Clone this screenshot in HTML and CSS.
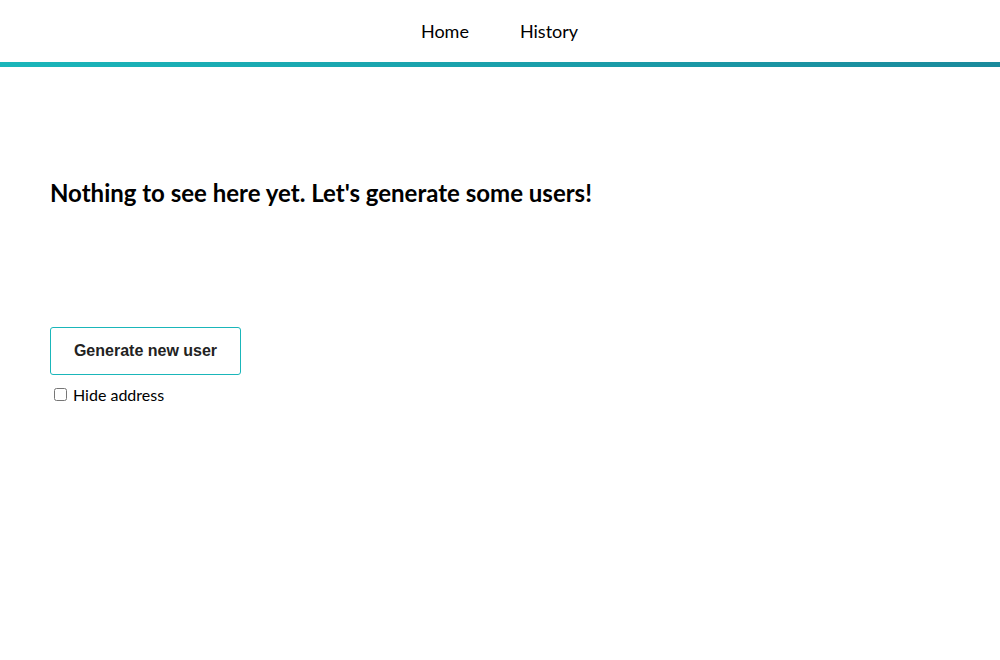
FILE: index.html
```html
<!DOCTYPE html>
<html>
<head>
<meta charset="utf-8">
<link rel="stylesheet" href="styles.css">
</head>
<body>
<header class="topbar">
  <nav class="nav">
    <a class="nav-link" href="#">Home</a>
    <a class="nav-link" href="#">History</a>
  </nav>
</header>
<main class="content">
  <h1 class="title">Nothing to see here yet. Let's generate some users!</h1>
  <div class="controls">
    <button class="gen-btn" type="button">Generate new user</button>
    <label class="hide-label"><input type="checkbox" class="hide-box"> Hide address</label>
  </div>
</main>
</body>
</html>
```

FILE: styles.css
```css
html, body {
  margin: 0;
  padding: 0;
  background: #fff;
}
body {
  font-family: Lato, "Liberation Sans", sans-serif;
  color: #000;
}
.topbar {
  height: 62px;
  border-bottom: 5px solid transparent;
  border-image: linear-gradient(to right, #1ab6ba, #1a8a9c) 1;
  display: flex;
  align-items: center;
  justify-content: center;
}
.nav {
  display: flex;
  gap: 51px;
  margin-right: 1px;
}
.nav-link {
  font-size: 18px;
  color: #000;
  text-decoration: none;
}
.content {
  padding: 0 50px;
}
.title {
  font-size: 24px;
  font-weight: 700;
  margin: 111px 0 0 0;
  line-height: 29px;
}
.controls {
  margin-top: 120px;
  display: flex;
  flex-direction: column;
  align-items: flex-start;
}
.gen-btn {
  font-family: "Liberation Sans", Arial, sans-serif;
  font-weight: 700;
  font-size: 16px;
  color: #222;
  background: #fff;
  border: 1px solid #1ab6ba;
  border-radius: 3px;
  width: 191px;
  height: 48px;
  padding: 0;
}
.hide-label {
  margin-top: 10px;
  font-size: 16px;
  display: flex;
  align-items: center;
  gap: 2px;
}
.hide-box {
  margin: 0 4px 0 4px;
  width: 13px;
  height: 13px;
}
```
